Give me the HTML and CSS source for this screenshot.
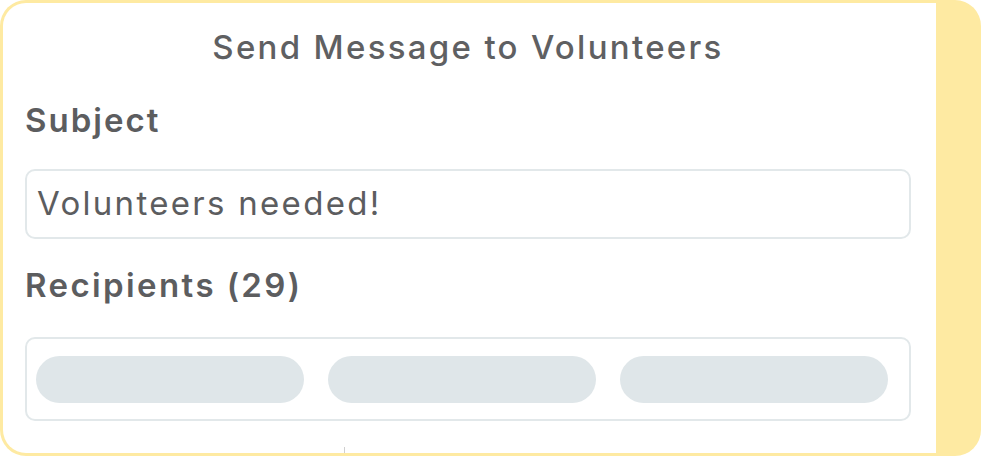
FILE: index.html
```html
<!DOCTYPE html>
<html lang="en">
<head>
<meta charset="utf-8">
<title>Send Message to Volunteers</title>
<link rel="stylesheet" href="styles.css">
</head>
<body>
<div class="frame">
  <section class="panel">
    <h1 class="title">Send Message to Volunteers</h1>
    <label class="label label-subject" for="subject">Subject</label>
    <input class="field" id="subject" type="text" value="Volunteers needed!" readonly>
    <h2 class="label label-recipients">Recipients (29)</h2>
    <div class="recipients">
      <span class="pill"></span>
      <span class="pill"></span>
      <span class="pill"></span>
    </div>
    <span class="tick"></span>
  </section>
</div>
</body>
</html>
```

FILE: styles.css
```css
* { box-sizing: border-box; }
html, body { margin: 0; padding: 0; background: #ffffff; }
body { font-family: "Inter", "Liberation Sans", sans-serif; color: #5c5d5f; }

.frame {
  width: 981px;
  height: 456px;
  background: #feeaa2;
  border-radius: 26px;
  padding: 3px 45px 3px 3px;
  display: flex;
}

.panel {
  position: relative;
  flex: 1;
  background: #ffffff;
  border-radius: 23px 0 0 23px;
  padding: 24px 25px 0 22px;
  display: flex;
  flex-direction: column;
}

.title {
  margin: 0;
  font-size: 33px;
  line-height: 40px;
  font-weight: 500;
  text-align: center;
  letter-spacing: 2.3px;
  color: #5f6062;
}

.label {
  display: block;
  margin: 0;
  font-size: 33px;
  line-height: 40px;
  font-weight: 600;
  letter-spacing: 2px;
  color: #5c5d5f;
}
.label-subject { margin-top: 33px; }
.label-recipients { margin-top: 26px; letter-spacing: 2.4px; }

.field {
  margin-top: 29px;
  height: 70px;
  width: 100%;
  border: 2px solid #e2e8ea;
  border-radius: 10px;
  padding: 0 10px 2px 10px;
  font-family: inherit;
  font-size: 33px;
  font-weight: 400;
  letter-spacing: 2.3px;
  color: #5c5d5f;
  background: #ffffff;
  outline: none;
}

.recipients {
  margin-top: 32px;
  height: 84px;
  border: 2px solid #e2e8ea;
  border-radius: 10px;
  padding: 17px 9px 0 9px;
  display: flex;
  gap: 24px;
}

.pill {
  width: 268px;
  height: 47px;
  border-radius: 24px;
  background: #dfe6e9;
}

.tick {
  position: absolute;
  left: 341px;
  bottom: 0;
  width: 1px;
  height: 6px;
  background: #d0d0d0;
}
```
